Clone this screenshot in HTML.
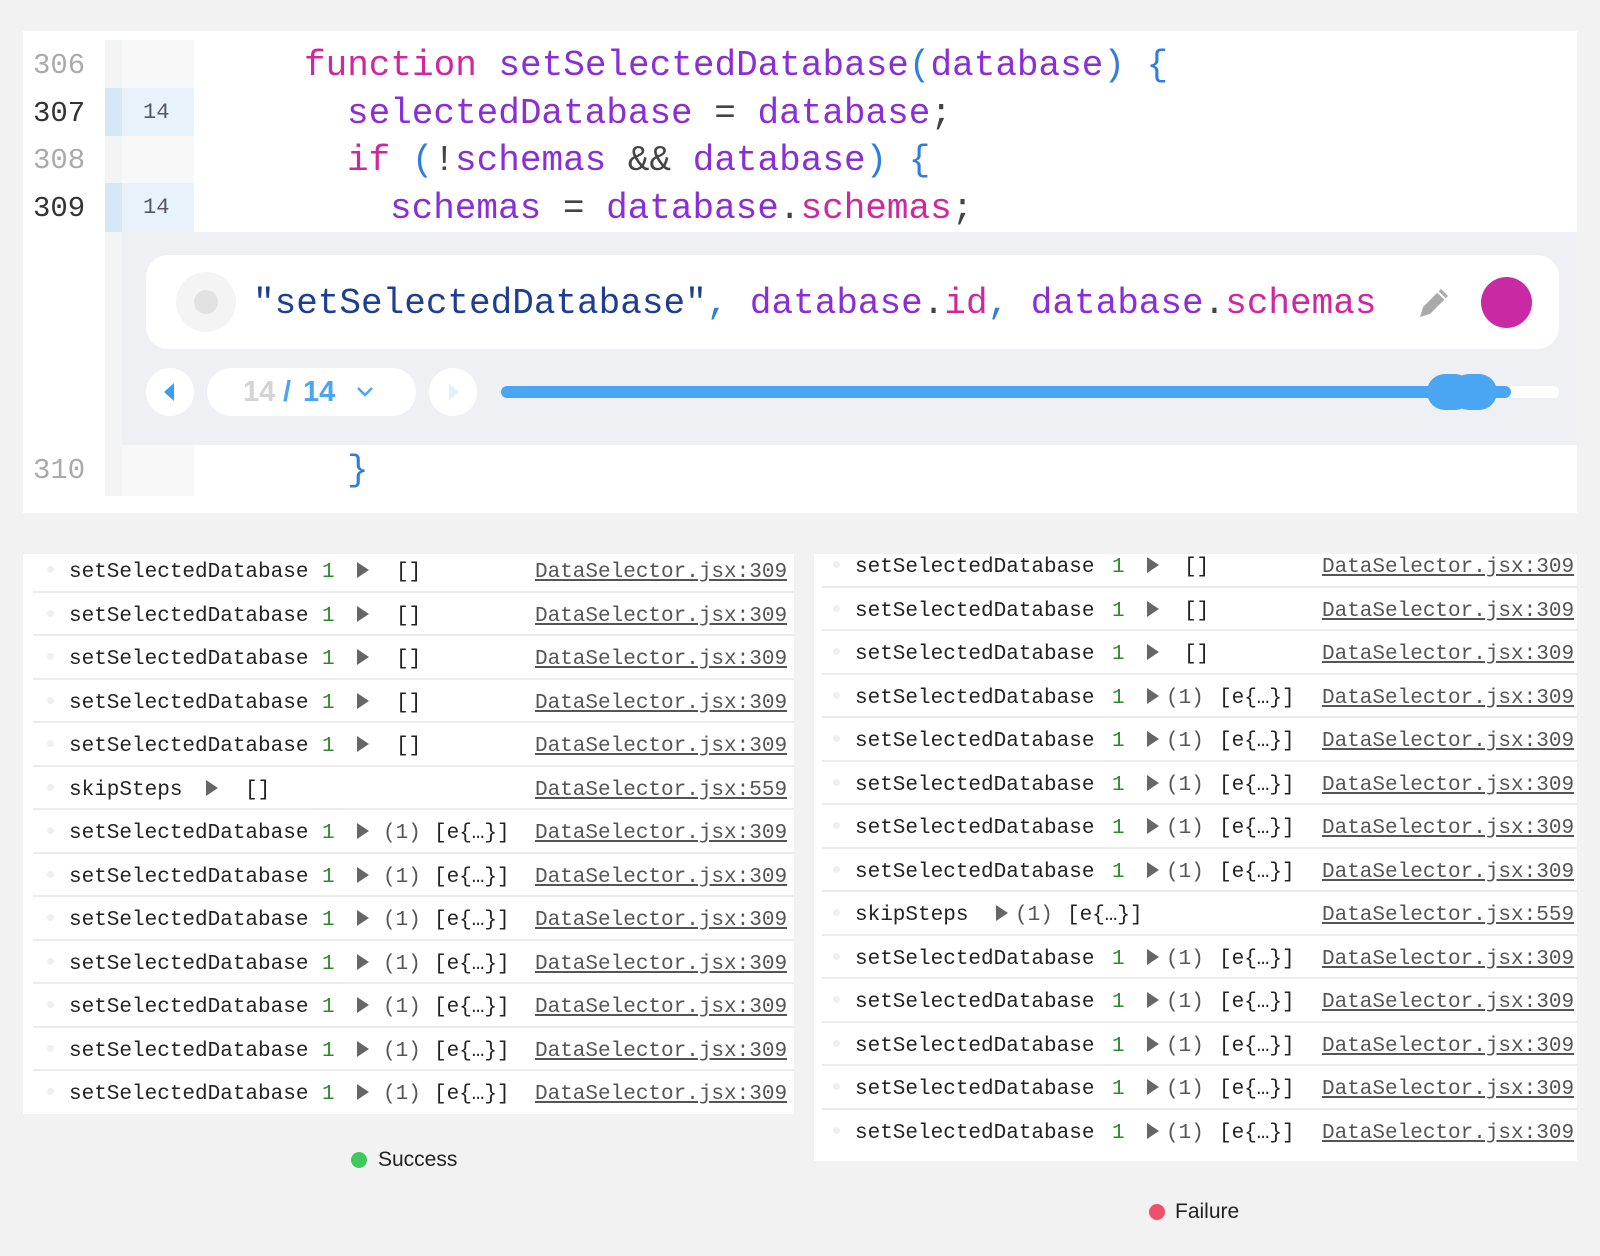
<!DOCTYPE html>
<html><head><meta charset="utf-8"><style>
*{margin:0;padding:0;box-sizing:border-box}
body{width:1600px;height:1256px;background:#f2f2f3;position:relative;overflow:hidden;font-family:"Liberation Mono",monospace}
.abs{position:absolute}
.code{font-size:36px;white-space:pre;line-height:48px}
.ln{position:absolute;left:33px;font-size:29px;color:#aaa;line-height:48px}
.ln.b{color:#333}
.k{color:#d1279c}.p{color:#8a2fd6}.b{color:#2f7de1}.d{color:#444}.s{color:#1e3f8f}
.row{position:absolute;height:43.5px;border-bottom:2px solid #ececec;font-size:21px;line-height:48px;white-space:pre;color:#222}
.row span{position:absolute;top:0}
.g{color:#2c8a2c}
.row .dot{width:7px;height:7px;border-radius:50%;background:#efefef;top:17px}
.row .tri{width:0;height:0;border-left:12px solid #666;border-top:8px solid transparent;border-bottom:8px solid transparent;top:13px}
.lk{color:#555;text-decoration:underline}
.gr{color:#555}
</style></head><body>
<!-- code panel -->
<div class="abs" style="left:23px;top:31px;width:1554px;height:482px;background:#fff"></div>
<div class="abs" style="left:105px;top:40px;width:17px;height:456px;background:#f3f4f6"></div>
<div class="abs" style="left:122px;top:40px;width:72px;height:192px;background:#f8f8f9"></div>
<div class="abs" style="left:122px;top:445px;width:72px;height:51px;background:#f8f8f9"></div>
<div class="abs" style="left:105px;top:88px;width:89px;height:48px;background:#e8f2fa"></div>
<div class="abs" style="left:105px;top:88px;width:17px;height:48px;background:#d4e8f6"></div>
<div class="abs" style="left:105px;top:183px;width:89px;height:49px;background:#e8f2fa"></div>
<div class="abs" style="left:105px;top:183px;width:17px;height:49px;background:#d4e8f6"></div>
<div class="ln" style="top:42px">306</div>
<div class="ln b" style="top:90px">307</div>
<div class="ln" style="top:137px">308</div>
<div class="ln b" style="top:185px">309</div>
<div class="ln" style="top:447px">310</div>
<div class="abs" style="left:143px;top:101px;font-size:22px;color:#556;line-height:24px">14</div>
<div class="abs" style="left:143px;top:196px;font-size:22px;color:#556;line-height:24px">14</div>
<div class="abs code" style="left:304px;top:42px"><span class="k">function</span> <span class="p">setSelectedDatabase</span><span class="b">(</span><span class="p">database</span><span class="b">) {</span></div>
<div class="abs code" style="left:347px;top:90px"><span class="p">selectedDatabase</span> <span class="d">=</span> <span class="p">database</span><span class="d">;</span></div>
<div class="abs code" style="left:347px;top:137px"><span class="k">if</span> <span class="b">(</span><span class="d">!</span><span class="p">schemas</span> <span class="d">&amp;&amp;</span> <span class="p">database</span><span class="b">) {</span></div>
<div class="abs code" style="left:390px;top:185px"><span class="p">schemas</span> <span class="d">=</span> <span class="p">database</span><span class="d">.</span><span class="k">schemas</span><span class="d">;</span></div>
<div class="abs code" style="left:347px;top:447px"><span class="b">}</span></div>
<!-- grey panel -->
<div class="abs" style="left:122px;top:232px;width:1455px;height:213px;background:#eff0f3"></div>
<div class="abs" style="left:146px;top:255px;width:1413px;height:94px;background:#fff;border-radius:22px"></div>
<div class="abs" style="left:176px;top:272px;width:60px;height:60px;border-radius:50%;background:#f4f4f4"></div>
<div class="abs" style="left:194px;top:290px;width:24px;height:24px;border-radius:50%;background:#e2e2e2"></div>
<div class="abs code" style="left:253px;top:280px"><span class="s">"setSelectedDatabase"</span><span class="b">,</span> <span class="p">database</span><span class="d">.</span><span class="k">id</span><span class="b">,</span> <span class="p">database</span><span class="d">.</span><span class="k">schemas</span></div>
<svg class="abs" style="left:1414px;top:283px" width="40" height="40" viewBox="0 0 40 40"><path d="M6 34 L9 24 L27 6 L34 13 L16 31 Z" fill="#aaa"/><path d="M24 9 L31 16" stroke="#fff" stroke-width="2"/></svg>
<div class="abs" style="left:1481px;top:277px;width:51px;height:51px;border-radius:50%;background:#c92aa3"></div>
<!-- nav -->
<div class="abs" style="left:146px;top:368px;width:48px;height:48px;border-radius:50%;background:#fff"></div>
<svg class="abs" style="left:158px;top:380px" width="24" height="24"><path d="M6 12 L16 3 L16 21 Z" fill="#3d9ef0"/></svg>
<div class="abs" style="left:207px;top:368px;width:209px;height:48px;border-radius:24px;background:#fff;font-family:'Liberation Sans',sans-serif;font-weight:bold;font-size:29px;line-height:48px"><span style="position:absolute;left:36px;color:#d4d4d8">14</span><span style="position:absolute;left:76px;color:#4aa6f2">/</span><span style="position:absolute;left:96px;color:#4aa6f2">14</span>
<svg style="position:absolute;left:148px;top:16px" width="20" height="16"><path d="M3 4 L10 11 L17 4" fill="none" stroke="#4aa6f2" stroke-width="2.5"/></svg></div>
<div class="abs" style="left:429px;top:368px;width:48px;height:48px;border-radius:50%;background:#fff"></div>
<svg class="abs" style="left:441px;top:380px" width="24" height="24"><path d="M18 12 L8 3 L8 21 Z" fill="#e4f1fc"/></svg>
<div class="abs" style="left:501px;top:386px;width:1058px;height:12px;border-radius:6px;background:#fff"></div>
<div class="abs" style="left:501px;top:386px;width:1010px;height:12px;border-radius:6px;background:#4aa6f2"></div>
<div class="abs" style="left:1427px;top:374px;width:46px;height:36px;border-radius:18px;background:#4aa6f2"></div>
<div class="abs" style="left:1451px;top:374px;width:46px;height:36px;border-radius:18px;background:#4aa6f2"></div>

<!-- left console -->
<div class="abs" style="left:23px;top:554px;width:771px;height:560px;background:#fff"></div>

<div class="row" style="left:33px;top:549px;width:761px"><span class="dot" style="left:14px"></span><span style="left:36px">setSelectedDatabase</span><span class="g" style="left:289px">1</span><span class="tri" style="left:324px"></span><span style="left:363px">[]</span><span class="lk" style="left:502px">DataSelector.jsx:309</span></div>
<div class="row" style="left:33px;top:592.5px;width:761px"><span class="dot" style="left:14px"></span><span style="left:36px">setSelectedDatabase</span><span class="g" style="left:289px">1</span><span class="tri" style="left:324px"></span><span style="left:363px">[]</span><span class="lk" style="left:502px">DataSelector.jsx:309</span></div>
<div class="row" style="left:33px;top:636px;width:761px"><span class="dot" style="left:14px"></span><span style="left:36px">setSelectedDatabase</span><span class="g" style="left:289px">1</span><span class="tri" style="left:324px"></span><span style="left:363px">[]</span><span class="lk" style="left:502px">DataSelector.jsx:309</span></div>
<div class="row" style="left:33px;top:679.5px;width:761px"><span class="dot" style="left:14px"></span><span style="left:36px">setSelectedDatabase</span><span class="g" style="left:289px">1</span><span class="tri" style="left:324px"></span><span style="left:363px">[]</span><span class="lk" style="left:502px">DataSelector.jsx:309</span></div>
<div class="row" style="left:33px;top:723px;width:761px"><span class="dot" style="left:14px"></span><span style="left:36px">setSelectedDatabase</span><span class="g" style="left:289px">1</span><span class="tri" style="left:324px"></span><span style="left:363px">[]</span><span class="lk" style="left:502px">DataSelector.jsx:309</span></div>
<div class="row" style="left:33px;top:766.5px;width:761px"><span class="dot" style="left:14px"></span><span style="left:36px">skipSteps</span><span class="tri" style="left:173px"></span><span style="left:212px">[]</span><span class="lk" style="left:502px">DataSelector.jsx:559</span></div>
<div class="row" style="left:33px;top:810px;width:761px"><span class="dot" style="left:14px"></span><span style="left:36px">setSelectedDatabase</span><span class="g" style="left:289px">1</span><span class="tri" style="left:324px"></span><span class="gr" style="left:350px">(1)</span><span style="left:401px">[e{…}]</span><span class="lk" style="left:502px">DataSelector.jsx:309</span></div>
<div class="row" style="left:33px;top:853.5px;width:761px"><span class="dot" style="left:14px"></span><span style="left:36px">setSelectedDatabase</span><span class="g" style="left:289px">1</span><span class="tri" style="left:324px"></span><span class="gr" style="left:350px">(1)</span><span style="left:401px">[e{…}]</span><span class="lk" style="left:502px">DataSelector.jsx:309</span></div>
<div class="row" style="left:33px;top:897px;width:761px"><span class="dot" style="left:14px"></span><span style="left:36px">setSelectedDatabase</span><span class="g" style="left:289px">1</span><span class="tri" style="left:324px"></span><span class="gr" style="left:350px">(1)</span><span style="left:401px">[e{…}]</span><span class="lk" style="left:502px">DataSelector.jsx:309</span></div>
<div class="row" style="left:33px;top:940.5px;width:761px"><span class="dot" style="left:14px"></span><span style="left:36px">setSelectedDatabase</span><span class="g" style="left:289px">1</span><span class="tri" style="left:324px"></span><span class="gr" style="left:350px">(1)</span><span style="left:401px">[e{…}]</span><span class="lk" style="left:502px">DataSelector.jsx:309</span></div>
<div class="row" style="left:33px;top:984px;width:761px"><span class="dot" style="left:14px"></span><span style="left:36px">setSelectedDatabase</span><span class="g" style="left:289px">1</span><span class="tri" style="left:324px"></span><span class="gr" style="left:350px">(1)</span><span style="left:401px">[e{…}]</span><span class="lk" style="left:502px">DataSelector.jsx:309</span></div>
<div class="row" style="left:33px;top:1027.5px;width:761px"><span class="dot" style="left:14px"></span><span style="left:36px">setSelectedDatabase</span><span class="g" style="left:289px">1</span><span class="tri" style="left:324px"></span><span class="gr" style="left:350px">(1)</span><span style="left:401px">[e{…}]</span><span class="lk" style="left:502px">DataSelector.jsx:309</span></div>
<div class="row" style="left:33px;top:1071px;width:761px;border-bottom:none"><span class="dot" style="left:14px"></span><span style="left:36px">setSelectedDatabase</span><span class="g" style="left:289px">1</span><span class="tri" style="left:324px"></span><span class="gr" style="left:350px">(1)</span><span style="left:401px">[e{…}]</span><span class="lk" style="left:502px">DataSelector.jsx:309</span></div>

<div class="abs" style="left:351px;top:1152px;width:16px;height:16px;border-radius:50%;background:#3ec95a"></div>
<div class="abs" style="left:378px;top:1148px;font-family:'Liberation Sans',sans-serif;font-size:21px;color:#222">Success</div>

<!-- right console -->
<div class="abs" style="left:814px;top:554px;width:763px;height:607px;background:#fff"></div>
<div class="row" style="left:822px;top:544px;width:755px"><span class="dot" style="left:11px"></span><span style="left:33px">setSelectedDatabase</span><span class="g" style="left:290px">1</span><span class="tri" style="left:325px"></span><span style="left:362px">[]</span><span class="lk" style="left:500px">DataSelector.jsx:309</span></div>
<div class="row" style="left:822px;top:587.5px;width:755px"><span class="dot" style="left:11px"></span><span style="left:33px">setSelectedDatabase</span><span class="g" style="left:290px">1</span><span class="tri" style="left:325px"></span><span style="left:362px">[]</span><span class="lk" style="left:500px">DataSelector.jsx:309</span></div>
<div class="row" style="left:822px;top:631px;width:755px"><span class="dot" style="left:11px"></span><span style="left:33px">setSelectedDatabase</span><span class="g" style="left:290px">1</span><span class="tri" style="left:325px"></span><span style="left:362px">[]</span><span class="lk" style="left:500px">DataSelector.jsx:309</span></div>
<div class="row" style="left:822px;top:674.5px;width:755px"><span class="dot" style="left:11px"></span><span style="left:33px">setSelectedDatabase</span><span class="g" style="left:290px">1</span><span class="tri" style="left:325px"></span><span class="gr" style="left:344px">(1)</span><span style="left:397px">[e{…}]</span><span class="lk" style="left:500px">DataSelector.jsx:309</span></div>
<div class="row" style="left:822px;top:718px;width:755px"><span class="dot" style="left:11px"></span><span style="left:33px">setSelectedDatabase</span><span class="g" style="left:290px">1</span><span class="tri" style="left:325px"></span><span class="gr" style="left:344px">(1)</span><span style="left:397px">[e{…}]</span><span class="lk" style="left:500px">DataSelector.jsx:309</span></div>
<div class="row" style="left:822px;top:761.5px;width:755px"><span class="dot" style="left:11px"></span><span style="left:33px">setSelectedDatabase</span><span class="g" style="left:290px">1</span><span class="tri" style="left:325px"></span><span class="gr" style="left:344px">(1)</span><span style="left:397px">[e{…}]</span><span class="lk" style="left:500px">DataSelector.jsx:309</span></div>
<div class="row" style="left:822px;top:805px;width:755px"><span class="dot" style="left:11px"></span><span style="left:33px">setSelectedDatabase</span><span class="g" style="left:290px">1</span><span class="tri" style="left:325px"></span><span class="gr" style="left:344px">(1)</span><span style="left:397px">[e{…}]</span><span class="lk" style="left:500px">DataSelector.jsx:309</span></div>
<div class="row" style="left:822px;top:848.5px;width:755px"><span class="dot" style="left:11px"></span><span style="left:33px">setSelectedDatabase</span><span class="g" style="left:290px">1</span><span class="tri" style="left:325px"></span><span class="gr" style="left:344px">(1)</span><span style="left:397px">[e{…}]</span><span class="lk" style="left:500px">DataSelector.jsx:309</span></div>
<div class="row" style="left:822px;top:892px;width:755px"><span class="dot" style="left:11px"></span><span style="left:33px">skipSteps</span><span class="tri" style="left:174px"></span><span class="gr" style="left:193px">(1)</span><span style="left:245px">[e{…}]</span><span class="lk" style="left:500px">DataSelector.jsx:559</span></div>
<div class="row" style="left:822px;top:935.5px;width:755px"><span class="dot" style="left:11px"></span><span style="left:33px">setSelectedDatabase</span><span class="g" style="left:290px">1</span><span class="tri" style="left:325px"></span><span class="gr" style="left:344px">(1)</span><span style="left:397px">[e{…}]</span><span class="lk" style="left:500px">DataSelector.jsx:309</span></div>
<div class="row" style="left:822px;top:979px;width:755px"><span class="dot" style="left:11px"></span><span style="left:33px">setSelectedDatabase</span><span class="g" style="left:290px">1</span><span class="tri" style="left:325px"></span><span class="gr" style="left:344px">(1)</span><span style="left:397px">[e{…}]</span><span class="lk" style="left:500px">DataSelector.jsx:309</span></div>
<div class="row" style="left:822px;top:1022.5px;width:755px"><span class="dot" style="left:11px"></span><span style="left:33px">setSelectedDatabase</span><span class="g" style="left:290px">1</span><span class="tri" style="left:325px"></span><span class="gr" style="left:344px">(1)</span><span style="left:397px">[e{…}]</span><span class="lk" style="left:500px">DataSelector.jsx:309</span></div>
<div class="row" style="left:822px;top:1066px;width:755px"><span class="dot" style="left:11px"></span><span style="left:33px">setSelectedDatabase</span><span class="g" style="left:290px">1</span><span class="tri" style="left:325px"></span><span class="gr" style="left:344px">(1)</span><span style="left:397px">[e{…}]</span><span class="lk" style="left:500px">DataSelector.jsx:309</span></div>
<div class="row" style="left:822px;top:1109.5px;width:755px;border-bottom:none"><span class="dot" style="left:11px"></span><span style="left:33px">setSelectedDatabase</span><span class="g" style="left:290px">1</span><span class="tri" style="left:325px"></span><span class="gr" style="left:344px">(1)</span><span style="left:397px">[e{…}]</span><span class="lk" style="left:500px">DataSelector.jsx:309</span></div>

<div class="abs" style="left:1149px;top:1204px;width:16px;height:16px;border-radius:50%;background:#f0506a"></div>
<div class="abs" style="left:1175px;top:1200px;font-family:'Liberation Sans',sans-serif;font-size:21px;color:#222">Failure</div>
</body></html>
